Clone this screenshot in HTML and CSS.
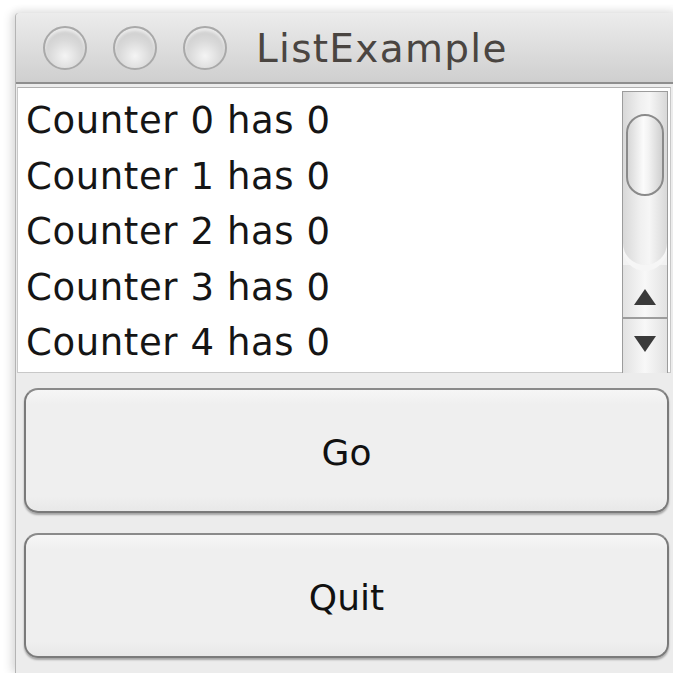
FILE: index.html
```html
<!DOCTYPE html>
<html>
<head>
<meta charset="utf-8">
<title>ListExample</title>
<link rel="stylesheet" href="styles.css">
</head>
<body>
<div class="desk">
  <div class="window">
    <div class="titlebar">
      <div class="lights">
        <span class="light"></span>
        <span class="light"></span>
        <span class="light"></span>
      </div>
      <div class="title">ListExample</div>
    </div>
    <div class="content">
      <div class="listbox">
        <ul class="items">
          <li>Counter 0 has 0</li>
          <li>Counter 1 has 0</li>
          <li>Counter 2 has 0</li>
          <li>Counter 3 has 0</li>
          <li>Counter 4 has 0</li>
        </ul>
        <div class="scrollbar">
          <div class="track">
            <div class="thumb"></div>
          </div>
          <div class="arrow up"><span class="tri-up"></span></div>
          <div class="arrow down"><span class="tri-down"></span></div>
        </div>
      </div>
      <div class="buttons">
        <button class="btn">Go</button>
        <button class="btn">Quit</button>
      </div>
    </div>
  </div>
</div>
</body>
</html>
```

FILE: styles.css
```css
html, body {
  margin: 0;
  padding: 0;
  background: #ffffff;
  width: 673px;
  height: 673px;
  overflow: hidden;
}

.desk {
  padding: 13px 0 0 15px;
  font-family: "DejaVu Sans", "Liberation Sans", sans-serif;
}

.window {
  width: 662px;
  height: 660px;
  background: #ececec;
  border-left: 1px solid #b4b4b4;
  box-shadow: -4px 0 10px rgba(0, 0, 0, 0.12), 0 -3px 8px rgba(0, 0, 0, 0.06);
  border-radius: 4px 0 0 0;
  display: flex;
  flex-direction: column;
  overflow: hidden;
}

.titlebar {
  height: 69px;
  flex: none;
  background: linear-gradient(#ececec, #dcdcdc 55%, #cfcfcf);
  border-bottom: 2px solid #8e8e8e;
  display: flex;
  align-items: center;
  border-radius: 4px 0 0 0;
}

.lights {
  display: flex;
  gap: 26px;
  padding-left: 27px;
}

.light {
  width: 44px;
  height: 44px;
  border-radius: 50%;
  box-sizing: border-box;
  border: 2px solid #a9a9a9;
  background: radial-gradient(circle at 50% 70%, #f4f4f4 0%, #dadada 45%, #c4c4c4 100%);
  box-shadow: inset 0 3px 3px rgba(255, 255, 255, 0.6);
}

.title {
  margin-left: 29px;
  font-size: 39px;
  color: #4a4541;
  letter-spacing: 1.3px;
  padding-top: 2px;
}

.content {
  flex: 1;
  padding: 3px 0 0 1px;
  display: flex;
  flex-direction: column;
}

.listbox {
  height: 286px;
  width: 654px;
  flex: none;
  background: #ffffff;
  border: 1px solid #c8c8c8;
  border-top-color: #b0b0b0;
  display: flex;
  box-sizing: border-box;
}

.items {
  list-style: none;
  margin: 0;
  padding: 5px 0 0 8px;
  flex: 1;
  font-size: 37px;
  color: #151515;
  letter-spacing: 0.6px;
}

.items li {
  height: 55.5px;
  line-height: 55.5px;
  white-space: nowrap;
}

.scrollbar {
  width: 46px;
  margin: 3px 2px 0 0;
  height: 282px;
  box-sizing: border-box;
  border: 1px solid #9c9c9c;
  border-bottom: none;
  display: flex;
  flex-direction: column;
  background: #f2f2f2;
}

.track {
  height: 173px;
  position: relative;
  background: linear-gradient(90deg, #d8d8d8, #f0f0f0 40%, #f6f6f6 60%, #d8d8d8);
  border-radius: 0 0 50% 50% / 0 0 22px 22px;
  box-shadow: 0 6px 0 #f6f6f6;
}

.thumb {
  position: absolute;
  left: 3px;
  right: 3px;
  top: 22px;
  height: 82px;
  box-sizing: border-box;
  border: 2px solid #8a8a8a;
  border-radius: 19px;
  background: linear-gradient(90deg, #d7d7d7, #fbfbfb 45%, #f3f3f3 60%, #d0d0d0);
}

.arrow {
  display: flex;
  justify-content: center;
  background: linear-gradient(90deg, #e2e2e2, #f8f8f8 50%, #e2e2e2);
}

.arrow.up {
  height: 54px;
  align-items: center;
  border-bottom: 2px solid #9c9c9c;
  padding-top: 12px;
  box-sizing: border-box;
}

.arrow.down {
  flex: 1;
  align-items: flex-start;
  padding-top: 17px;
}

.tri-up {
  width: 0;
  height: 0;
  border-left: 11px solid transparent;
  border-right: 11px solid transparent;
  border-bottom: 16px solid #3a3a3a;
}

.tri-down {
  width: 0;
  height: 0;
  border-left: 11px solid transparent;
  border-right: 11px solid transparent;
  border-top: 16px solid #3a3a3a;
}

.buttons {
  display: flex;
  flex-direction: column;
  gap: 20px;
  padding: 15px 0 0 7px;
}

.btn {
  width: 645px;
  height: 125px;
  flex: none;
  box-sizing: border-box;
  border: 2px solid #7a7a7a;
  border-top-color: #8a8a8a;
  border-radius: 14px;
  background: linear-gradient(#f6f6f6, #efefef 12%, #efefef 88%, #e8e8e8);
  box-shadow: 0 2px 2px rgba(0, 0, 0, 0.3);
  font-family: "DejaVu Sans", "Liberation Sans", sans-serif;
  font-size: 36px;
  color: #111;
  padding: 4px 0 0 0;
}
```
